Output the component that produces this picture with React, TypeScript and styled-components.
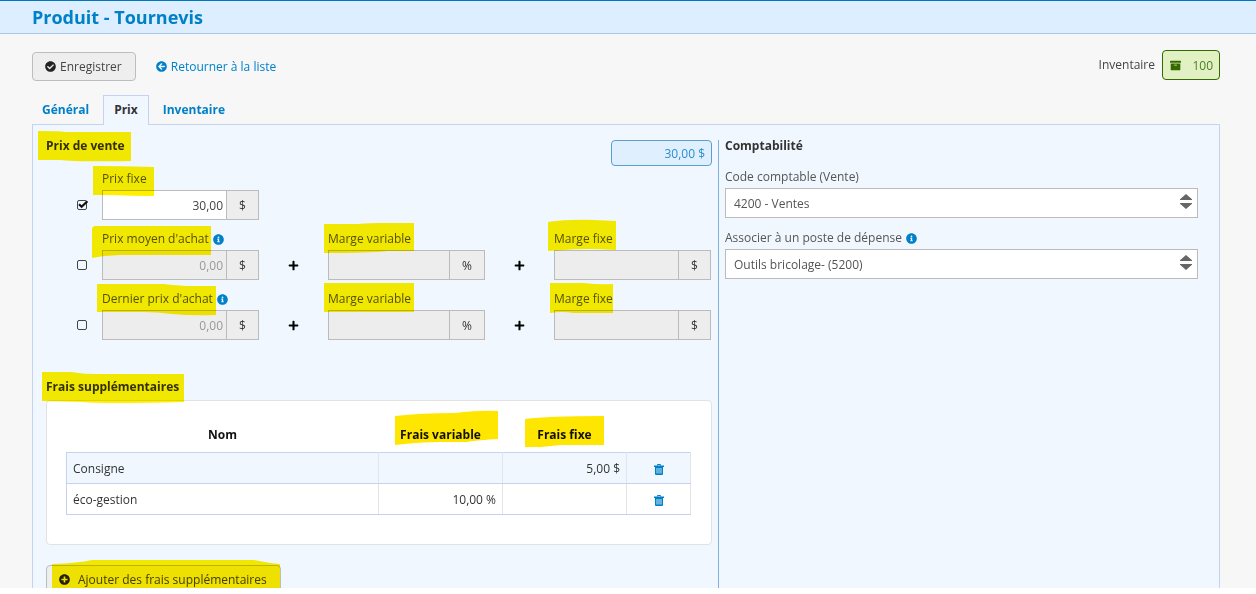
import React from "react";
import styled, { createGlobalStyle } from "styled-components";
import {
  FaArchive,
  FaArrowCircleLeft,
  FaCheckCircle,
  FaInfoCircle,
  FaPlus,
  FaPlusCircle,
} from "react-icons/fa";

const blue = "#0080c8";
const panelLine = "#c6d2f4";

const GlobalStyle = createGlobalStyle`
  *, *::before, *::after { box-sizing: border-box; }
  body {
    margin: 0;
    background: #fff;
    color: #444;
    font-family: "Open Sans", "Liberation Sans", sans-serif;
    font-size: 12px;
    line-height: 16px;
  }
  button, input, select { font: inherit; color: inherit; margin: 0; }
`;

const Page = styled.div`
  display: flex;
  flex-direction: column;
  height: calc(100vh - 6px);
  overflow: hidden;
  background: #f7f7f7;
`;

const Header = styled.header`
  flex: none;
  padding: 0 32px;
  border-top: 1px solid #0078be;
  border-bottom: 1px solid #a6c9e4;
  background: #dceeff;
`;

const Title = styled.h1`
  margin: 0;
  color: ${blue};
  font-size: 18px;
  font-weight: 700;
  line-height: 32px;
`;

const Main = styled.main`
  flex: 1;
  display: flex;
  flex-direction: column;
  min-height: 0;
  padding: 16px 36px 0 32px;
`;

const Toolbar = styled.div`
  flex: none;
  display: flex;
  justify-content: space-between;
  align-items: flex-start;
`;

const Actions = styled.div`
  display: flex;
  align-items: center;
  gap: 20px;
  padding-top: 2px;
`;

const Button = styled.button`
  display: inline-flex;
  align-items: center;
  gap: 4px;
  height: 29px;
  padding: 0 13px 0 12px;
  border: 1px solid #bdbdbd;
  border-radius: 4px;
  background: #eee;
  cursor: pointer;
  svg { color: #222; }
`;

const AddButton = styled(Button)`
  gap: 8px;
  height: 30px;
  margin-top: 20px;
`;

const BackLink = styled.a`
  display: inline-flex;
  align-items: center;
  gap: 4px;
  color: ${blue};
  text-decoration: none;
`;

const Stock = styled.div`
  display: flex;
  align-items: center;
  gap: 7px;
`;

const StockBadge = styled.output`
  display: flex;
  align-items: center;
  justify-content: space-between;
  width: 58px;
  height: 30px;
  padding: 1px 6px 0 7px;
  border: 1px solid #326a00;
  border-radius: 4px;
  background: #e1f1c3;
  color: #4c7f24;
  svg { color: #326a00; }
`;

const Tabs = styled.nav`
  flex: none;
  display: flex;
  margin: 14px 0 -1px -1px;
`;

const Tab = styled.a<{ $active?: boolean }>`
  height: 30px;
  padding: 0 10px;
  border: 1px solid ${(p) => (p.$active ? panelLine : "transparent")};
  border-bottom: 0;
  background: ${(p) => (p.$active ? "#f0f7ff" : "transparent")};
  color: ${(p) => (p.$active ? "#333" : blue)};
  font-weight: 700;
  line-height: 28px;
  text-decoration: none;
  z-index: ${(p) => (p.$active ? 1 : 0)};
  & + & { margin-left: 3px; }
`;

const Panel = styled.div`
  flex: 1 0 auto;
  display: grid;
  grid-template-columns: minmax(0, 685fr) minmax(0, 501fr);
  padding-top: 15px;
  border: 1px solid ${panelLine};
  border-bottom: 0;
  background: #f0f7ff;
`;

const Sales = styled.section`
  padding: 0 6px 0 13px;
`;

const Accounting = styled.section`
  padding: 0 21px 0 6px;
  border-left: 1px solid #80b0dd;
`;

const Heading = styled.h2`
  margin: 0;
  color: #333;
  font-size: 12px;
  font-weight: 700;
  line-height: 12px;
`;

const SalesHead = styled.div`
  display: flex;
  justify-content: space-between;
  align-items: flex-start;
`;

const Price = styled.output`
  width: 101px;
  height: 26px;
  padding: 0 6px;
  border: 1px solid #5b9fcb;
  border-radius: 4px;
  background: #dfeffd;
  color: #2b8fcf;
  line-height: 26px;
  text-align: right;
`;

const PriceRow = styled.div`
  display: grid;
  grid-template-columns: 56px minmax(0, 157fr) minmax(0, 69fr) minmax(0, 157fr) minmax(0, 69fr) minmax(0, 157fr);
  align-items: end;
  padding-right: 1px;
  & + & { margin-top: 6px; }
`;

const Centre = styled.div`
  display: flex;
  align-items: center;
  justify-content: center;
  height: 30px;
  color: #000;
`;

const TickCell = styled(Centre)`
  padding-left: 16px;
`;

const TickBox = styled.span`
  display: grid;
  svg, input { grid-area: 1 / 1; }
  svg { pointer-events: none; overflow: visible; }
`;

const Tick = styled.input`
  appearance: none;
  width: 10px;
  height: 10px;
  border: 1px solid #444;
  border-radius: 2px;
  background: transparent;
`;

const Label = styled.label`
  display: flex;
  align-items: center;
  height: 24px;
  padding-top: 2px;
  line-height: 22px;
  color: #555;
  white-space: nowrap;
`;

const InfoIcon = styled(FaInfoCircle)`
  margin-left: 4px;
  color: ${blue};
`;

const InputGroup = styled.div`
  display: flex;
  height: 30px;
  border: 1px solid #bbb;
  background: #ededed;
`;

const Input = styled.input`
  flex: 1;
  min-width: 0;
  padding: 2px 3px 0;
  border: 0;
  background: #fff;
  text-align: right;
  &:disabled { background: #ededed; color: #999; }
`;

const Addon = styled.span<{ $wide?: boolean }>`
  width: ${(p) => (p.$wide ? 35 : 32)}px;
  padding-top: 1px;
  border-left: 1px solid #bbb;
  color: #333;
  line-height: 28px;
  text-align: center;
`;

const FeesHeading = styled(Heading)`
  margin-top: 41px;
`;

const Card = styled.div`
  margin-top: 7px;
  padding: 17px 20px 29px 19px;
  border: 1px solid #e2e2e2;
  border-radius: 4px;
  background: #fff;
`;

const Table = styled.table`
  width: 100%;
  table-layout: fixed;
  border-collapse: collapse;
  color: #333;

  th {
    height: 34px;
    padding: 0;
    color: #111;
    font-weight: 700;
    text-align: center;
  }
  td {
    height: 31px;
    padding: 2px 6px 0;
    border: 1px solid #e4e4e4;
    border-top-color: ${panelLine};
    border-bottom-color: ${panelLine};
  }
  td:first-child { border-left-color: ${panelLine}; }
  tbody tr:nth-child(odd) { background: #f0f7ff; }
`;

const AmountCol = styled.col`
  width: 124px;
`;

const ActionCol = styled.col`
  width: 64px;
`;

const Amount = styled.td`
  text-align: right;
`;

const ActionCell = styled.td`
  text-align: center;
`;

const IconButton = styled.button`
  display: inline-flex;
  padding: 0;
  border: 0;
  background: none;
  color: ${blue};
  vertical-align: middle;
  cursor: pointer;
`;

const AccountField = styled.div`
  margin-top: 12px;
  & + & { margin-top: 7px; }
`;

const SelectBox = styled.div`
  position: relative;
  svg {
    position: absolute;
    top: 6px;
    right: 6px;
    pointer-events: none;
  }
`;

const Select = styled.select`
  display: block;
  appearance: none;
  width: 100%;
  height: 30px;
  padding: 2px 24px 0 8px;
  border: 1px solid #bbb;
  border-radius: 0;
  background: #fff;
  color: #555;
`;

const MarkedText = styled.span`
  position: relative;
  white-space: nowrap;
`;

const MarkerStroke = styled.svg`
  position: absolute;
  top: 0;
  left: 0;
  width: 1px;
  height: 1px;
  overflow: visible;
  mix-blend-mode: multiply;
  pointer-events: none;
`;

type MarkedProps = { stroke: string; color?: string; children: React.ReactNode };

/* Text with a highlighter stroke over it; the stroke is drawn from the text's top left corner. */
function Marked({ stroke, color = "#fff000", children }: MarkedProps) {
  return (
    <MarkedText>
      {children}
      <MarkerStroke aria-hidden="true">
        <path d={stroke} fill={color} />
      </MarkerStroke>
    </MarkedText>
  );
}

function TickField({ label, checked }: { label: string; checked?: boolean }) {
  return (
    <TickCell>
      <TickBox>
        <Tick type="checkbox" aria-label={label} defaultChecked={checked} />
        {checked && (
          <svg width="10" height="10" viewBox="0 0 10 10" aria-hidden="true">
            <path d="M2 4.2 4.6 6.8 10.4 1.2" fill="none" stroke="#111" strokeWidth="2.2" />
          </svg>
        )}
      </TickBox>
    </TickCell>
  );
}

type FieldProps = {
  id: string;
  label: string;
  stroke: string;
  unit: string;
  value?: string;
  disabled?: boolean;
  info?: boolean;
};

function Field({ id, label, stroke, unit, value = "", disabled, info }: FieldProps) {
  return (
    <div>
      <Label htmlFor={id}>
        <Marked stroke={stroke}>{label}</Marked>
        {info && <InfoIcon size={11} />}
      </Label>
      <InputGroup>
        <Input id={id} defaultValue={value} disabled={disabled} />
        <Addon $wide={unit === "%"}>{unit}</Addon>
      </InputGroup>
    </div>
  );
}

function Plus() {
  return (
    <Centre>
      <FaPlus size={11} />
    </Centre>
  );
}

function TrashIcon() {
  return (
    <svg width="10" height="11" viewBox="0 0 10 11" aria-hidden="true">
      <path d="M3.5 1.5V.5h3v1" fill="none" stroke="currentColor" />
      <path
        fill="currentColor"
        fillRule="evenodd"
        d="M0 1.5h10V3H9v7q0 1-1 1H2q-1 0-1-1V3H0zM2.6 4v5.4h.8V4zM4.6 4v5.4h.8V4zM6.6 4v5.4h.8V4z"
      />
    </svg>
  );
}

function AccountSelect({ id, label, value, info }: { id: string; label: string; value: string; info?: boolean }) {
  return (
    <AccountField>
      <Label htmlFor={id}>
        {label}
        {info && <InfoIcon size={11} />}
      </Label>
      <SelectBox>
        <Select id={id}>
          <option>{value}</option>
        </Select>
        <svg width="12" height="15" viewBox="0 0 12 15" aria-hidden="true">
          <path d="M6 0 12 5.2V6H0v-.8zM0 9h12v.8L6 15 0 9.8z" fill="#666" />
        </svg>
      </SelectBox>
    </AccountField>
  );
}

const fees = [
  { name: "Consigne", variable: "", fixed: "5,00 $" },
  { name: "éco-gestion", variable: "10,00 %", fixed: "" },
];

export default function App() {
  return (
    <Page>
      <GlobalStyle />
      <Header>
        <Title>Produit - Tournevis</Title>
      </Header>
      <Main>
        <Toolbar>
          <Actions>
            <Button type="button">
              <FaCheckCircle size={11} />
              Enregistrer
            </Button>
            <BackLink href="#liste">
              <FaArrowCircleLeft size={11} />
              Retourner à la liste
            </BackLink>
          </Actions>
          <Stock>
            <span>Inventaire</span>
            <StockBadge>
              <FaArchive size={11} />
              100
            </StockBadge>
          </Stock>
        </Toolbar>

        <Tabs>
          <Tab href="#general">Général</Tab>
          <Tab href="#prix" $active>Prix</Tab>
          <Tab href="#inventaire">Inventaire</Tab>
        </Tabs>

        <Panel>
          <Sales>
            <SalesHead>
              <Heading>
                <Marked stroke="M-8-6 Q12-6 20-5 L85-5 V24 Q30 25 14 23 L-8 23Z">Prix de vente</Marked>
              </Heading>
              <Price>30,00 $</Price>
            </SalesHead>

            <PriceRow>
              <TickField label="Prix fixe" checked />
              <Field
                id="prix-fixe"
                label="Prix fixe"
                stroke="M-9-2 Q20-2 52-1 V28 Q30 28 10 27 L-9 27Z"
                unit="$"
                value="30,00"
              />
            </PriceRow>
            <PriceRow>
              <TickField label="Prix moyen d'achat" />
              <Field
                id="prix-moyen"
                label="Prix moyen d'achat"
                stroke="M-10 0 L-8-2 H109 V27 H18 L2 28 L-10 30Z"
                unit="$"
                value="0,00"
                disabled
                info
              />
              <Plus />
              <Field
                id="marge-variable-moyen"
                label="Marge variable"
                stroke="M-4-4 H30 Q44-5 52-5 H86 V23 H60 Q40 25 -4 25Z"
                unit="%"
                disabled
              />
              <Plus />
              <Field
                id="marge-fixe-moyen"
                label="Marge fixe"
                stroke="M-6-6 Q14-9 40-8 L62-7 V22 Q30 20 10 22 L-6 23Z"
                unit="$"
                disabled
              />
            </PriceRow>
            <PriceRow>
              <TickField label="Dernier prix d'achat" />
              <Field
                id="dernier-prix"
                label="Dernier prix d'achat"
                stroke="M-5-4 H62 Q80-2 90-2 H114 V27 Q90 28 70 26 Q56 24 40 24 H-5Z"
                unit="$"
                value="0,00"
                disabled
                info
              />
              <Plus />
              <Field
                id="marge-variable-dernier"
                label="Marge variable"
                stroke="M-4-5 H86 V24 H-4Z"
                unit="%"
                disabled
              />
              <Plus />
              <Field
                id="marge-fixe-dernier"
                label="Marge fixe"
                stroke="M-4-5 H30 Q45-3 59-4 V25 H20 Q8 23 -4 25Z"
                unit="$"
                disabled
              />
            </PriceRow>

            <FeesHeading>
              <Marked stroke="M-4-6 H26 Q38-4 50-4 H138 V24 Q60 26 36 24 L-4 23Z">
                Frais supplémentaires
              </Marked>
            </FeesHeading>
            <Card>
              <Table>
                <colgroup>
                  <col />
                  <AmountCol />
                  <AmountCol />
                  <ActionCol />
                </colgroup>
                <thead>
                  <tr>
                    <th scope="col">Nom</th>
                    <th scope="col">
                      <Marked color="#ffe600" stroke="M-5-10 Q20-13 55-13 Q80-16 98-15 V13 Q80 14 66 16 H40 Q20 16 -5 19Z">
                        Frais variable
                      </Marked>
                    </th>
                    <th scope="col">
                      <Marked color="#ffe600" stroke="M-12-7 Q10-10 67-10 V19 H24 L4 21 H-12Z">
                        Frais fixe
                      </Marked>
                    </th>
                    <th aria-label="Actions" />
                  </tr>
                </thead>
                <tbody>
                  {fees.map((fee) => (
                    <tr key={fee.name}>
                      <td>{fee.name}</td>
                      <Amount>{fee.variable}</Amount>
                      <Amount>{fee.fixed}</Amount>
                      <ActionCell>
                        <IconButton type="button" aria-label={`Supprimer ${fee.name}`}>
                          <TrashIcon />
                        </IconButton>
                      </ActionCell>
                    </tr>
                  ))}
                </tbody>
              </Table>
            </Card>
            <AddButton type="button">
              <FaPlusCircle size={11} />
              <Marked stroke="M-26-8 Q0-9 14-12 H176 Q190-9 202-8 V22 H-26Z">
                Ajouter des frais supplémentaires
              </Marked>
            </AddButton>
          </Sales>

          <Accounting>
            <Heading>Comptabilité</Heading>
            <AccountSelect id="code-comptable" label="Code comptable (Vente)" value="4200 - Ventes" />
            <AccountSelect
              id="poste-depense"
              label="Associer à un poste de dépense"
              value="Outils bricolage- (5200)"
              info
            />
          </Accounting>
        </Panel>
      </Main>
    </Page>
  );
}
